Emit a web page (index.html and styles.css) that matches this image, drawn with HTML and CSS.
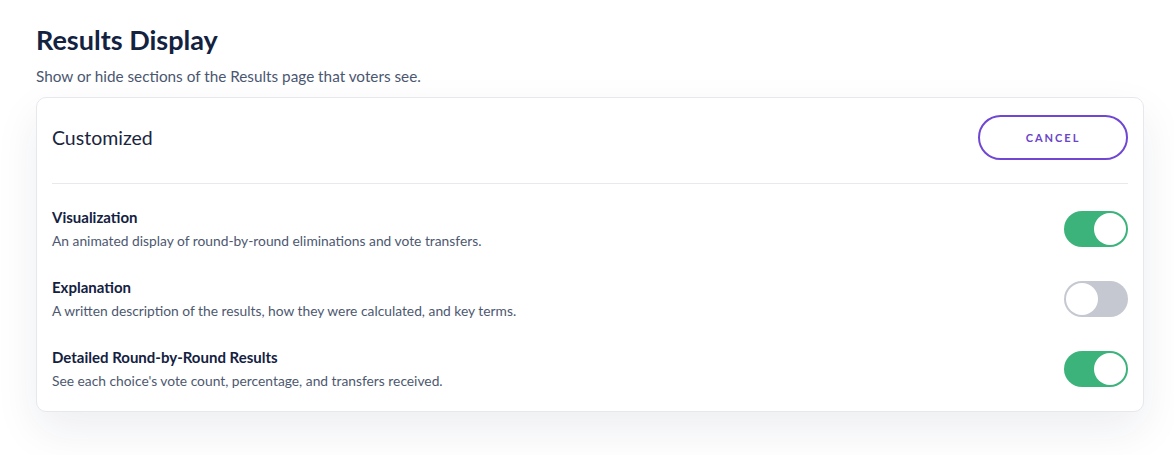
FILE: index.html
```html
<!DOCTYPE html>
<html lang="en">
<head>
<meta charset="utf-8">
<title>Results Display</title>
<link rel="stylesheet" href="styles.css">
</head>
<body>
<main class="page">
  <h1 class="title">Results Display</h1>
  <p class="subtitle">Show or hide sections of the Results page that voters see.</p>
  <section class="card">
    <div class="card-header">
      <span class="preset">Customized</span>
      <button class="btn-cancel" type="button">CANCEL</button>
    </div>
    <ul class="rows">
      <li class="row">
        <div class="row-text">
          <div class="row-title">Visualization</div>
          <div class="row-desc">An animated display of round-by-round eliminations and vote transfers.</div>
        </div>
        <span class="toggle on"><span class="knob"></span></span>
      </li>
      <li class="row">
        <div class="row-text">
          <div class="row-title">Explanation</div>
          <div class="row-desc">A written description of the results, how they were calculated, and key terms.</div>
        </div>
        <span class="toggle"><span class="knob"></span></span>
      </li>
      <li class="row">
        <div class="row-text">
          <div class="row-title">Detailed Round-by-Round Results</div>
          <div class="row-desc">See each choice's vote count, percentage, and transfers received.</div>
        </div>
        <span class="toggle on"><span class="knob"></span></span>
      </li>
    </ul>
  </section>
</main>
</body>
</html>
```
FILE: styles.css
```css
* { box-sizing: border-box; }
html, body { margin: 0; padding: 0; background: #ffffff; }
body {
  font-family: Lato, "Open Sans", "Liberation Sans", sans-serif;
  color: #14213d;
}
.page {
  padding: 22px 30px 44px 36px;
}
.title {
  margin: 0;
  font-size: 27px;
  line-height: 36px;
  font-weight: 700;
  color: #13223f;
}
.subtitle {
  margin: 7px 0 0;
  font-size: 15.3px;
  line-height: 22px;
  color: #4b5670;
}
.card {
  margin-top: 10px;
  width: 1108px;
  background: #fff;
  border: 1px solid #e7e8ee;
  border-radius: 10px;
  box-shadow: 0 18px 44px rgba(30, 40, 80, 0.08);
  padding: 17px 15px 24px 15px;
}
.card-header {
  display: flex;
  align-items: center;
  justify-content: space-between;
  padding-bottom: 23px;
  border-bottom: 1px solid #e8e9ee;
}
.preset {
  font-size: 19.5px;
  color: #1a2540;
}
.btn-cancel {
  width: 150px;
  height: 45px;
  border: 2px solid #6f47d3;
  border-radius: 23px;
  background: #fff;
  color: #6a45c8;
  font-family: inherit;
  font-size: 11px;
  font-weight: 700;
  letter-spacing: 2px;
  padding: 0;
}
.rows {
  list-style: none;
  margin: 0;
  padding: 27px 0 0;
  display: flex;
  flex-direction: column;
  gap: 34px;
}
.row {
  display: flex;
  align-items: center;
  justify-content: space-between;
  height: 36px;
}
.row-title {
  font-size: 15px;
  font-weight: 700;
  line-height: 22px;
  color: #13213f;
}
.row-desc {
  margin-top: 2px;
  font-size: 13.8px;
  line-height: 22px;
  color: #4d5870;
}
.toggle {
  position: relative;
  display: block;
  width: 64px;
  height: 36px;
  border-radius: 18px;
  background: #c5c8d1;
  flex: none;
}
.toggle .knob {
  position: absolute;
  top: 2px;
  left: 2px;
  width: 32px;
  height: 32px;
  border-radius: 50%;
  background: #fff;
}
.toggle.on { background: #3bb37b; }
.toggle.on .knob { left: 30px; }
```
